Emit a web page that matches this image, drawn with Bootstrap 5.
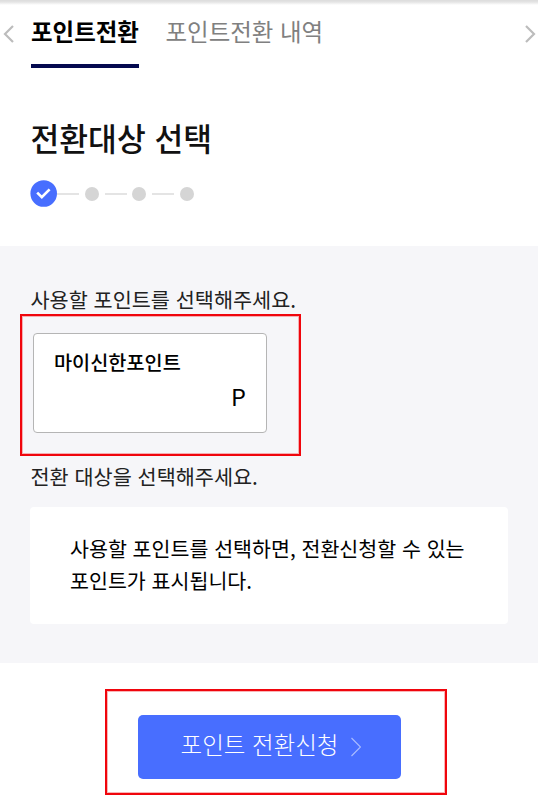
<!DOCTYPE html>
<html lang="ko">
<head>
<meta charset="utf-8">
<meta name="viewport" content="width=device-width, initial-scale=1">
<title>포인트전환</title>
<link href="https://cdn.jsdelivr.net/npm/bootstrap@5.3.0/dist/css/bootstrap.min.css" rel="stylesheet">
<style>
  body { font-family: "Noto Sans CJK KR", sans-serif; color: #111; background: #fff; overflow: hidden; }
  .top-shade { height: 5px; background: linear-gradient(#dcdcdc, #e4e4e4 40%, #fff); }
  .tab-bar { height: 63px; padding: 0 1px 0 3px; }
  .tab-bar svg { margin-top: 19.5px; }
  .tab-item { height: 62.5px; line-height: 52px; font-size: 23.45px; color: #808080; text-decoration: none; white-space: nowrap; }
  .tab-item.current { color: #000; font-weight: 700; width: 108px; margin: 0 26.5px 0 16px; border-bottom: 4px solid #04094f; }
  .page-title { font-size: 31.3px; font-weight: 500; line-height: 40px; margin: 50px 0 22px 30.5px; }
  .steps { height: 27px; margin-left: 30px; }
  .step-line { width: 22px; height: 2px; background: #e4e4e4; }
  .step-dot { width: 14px; height: 14px; background: #d5d5d5; margin: 1px 6px 0 5.5px; }
  .select-area { margin-top: 39px; height: 417px; background: #f6f6f9; padding: 38px 30px 0; }
  .field-label { font-size: 20.75px; line-height: 30px; color: #222; white-space: nowrap; padding-left: .5px; }
  .marked { border: 2px solid #f0050c; box-shadow: inset 0 0 0 1px rgba(240, 5, 12, .3); }
  .point-frame { width: 281px; height: 142px; margin-left: -10px; padding: 17px 11px; }
  .point-card { width: 234px; height: 100px; border: 1px solid #b5b5b5; border-radius: 4px; padding: 13px 20px 0; color: #000; }
  .point-name { font-size: 19.7px; font-weight: 500; line-height: 30px; }
  .point-unit { font-size: 23.5px; line-height: 38px; }
  .target-label { padding-top: 5px; }
  .notice { width: 478px; height: 117px; border-radius: 4px; padding: 25px 38px 0 40px; font-size: 20.6px; line-height: 32px; color: #000; margin-top: 16px; white-space: nowrap; }
  .submit-frame { width: 342px; height: 106px; margin: 26px 0 0 105px; padding: 24px 31px 0; }
  .submit { width: 263px; height: 64px; background: #486eff; color: #fff; border: 0; border-radius: 5px; font-size: 23.5px; font-weight: 300; line-height: 58px; padding: 0 0 6px 3px; }
  .submit svg { margin: 6px 0 0 13px; }
  .submit:hover { background: #3c61ee; color: #fff; }
</style>
<script src="https://cdn.jsdelivr.net/npm/bootstrap@5.3.0/dist/js/bootstrap.bundle.min.js"></script>
</head>
<body>
<div class="top-shade"></div>
<nav class="tab-bar d-flex">
  <svg width="12" height="18" viewBox="0 0 12 18" fill="none" stroke="#bcbcbc" stroke-width="2.2"><path d="M10 1 2 9l8 8"/></svg>
  <a class="tab-item current" href="#">포인트전환</a>
  <a class="tab-item" href="#">포인트전환 내역</a>
  <svg class="ms-auto" width="12" height="18" viewBox="0 0 12 18" fill="none" stroke="#bcbcbc" stroke-width="2.2"><path d="m1 1 8 8-8 8"/></svg>
</nav>
<main>
  <h1 class="page-title">전환대상 선택</h1>
  <div class="steps d-flex align-items-center">
    <svg width="27" height="27" viewBox="0 0 27 27"><circle cx="13.7" cy="13.5" r="13.3" fill="#486eff"/><path d="m7.2 12.6 4.6 4.5 7.8-7.7" fill="none" stroke="#fff" stroke-width="2.7"/></svg>
    <span class="step-line"></span><span class="step-dot rounded-circle"></span>
    <span class="step-line"></span><span class="step-dot rounded-circle"></span>
    <span class="step-line"></span><span class="step-dot rounded-circle"></span>
  </div>
  <section class="select-area">
    <div class="field-label">사용할 포인트를 선택해주세요.</div>
    <div class="marked point-frame">
      <div class="point-card bg-white">
        <div class="point-name">마이신한포인트</div>
        <div class="point-unit text-end">P</div>
      </div>
    </div>
    <div class="field-label target-label">전환 대상을 선택해주세요.</div>
    <div class="notice bg-white">사용할 포인트를 선택하면, 전환신청할 수 있는<br>포인트가 표시됩니다.</div>
  </section>
  <div class="marked submit-frame">
    <button class="btn submit d-flex align-items-center justify-content-center" type="button">포인트 전환신청
      <svg width="10" height="20" viewBox="0 0 10 20" fill="none" stroke="#a9bbff" stroke-width="1.2"><path d="m.5 1 9 9-9 9"/></svg>
    </button>
  </div>
</main>
</body>
</html>
